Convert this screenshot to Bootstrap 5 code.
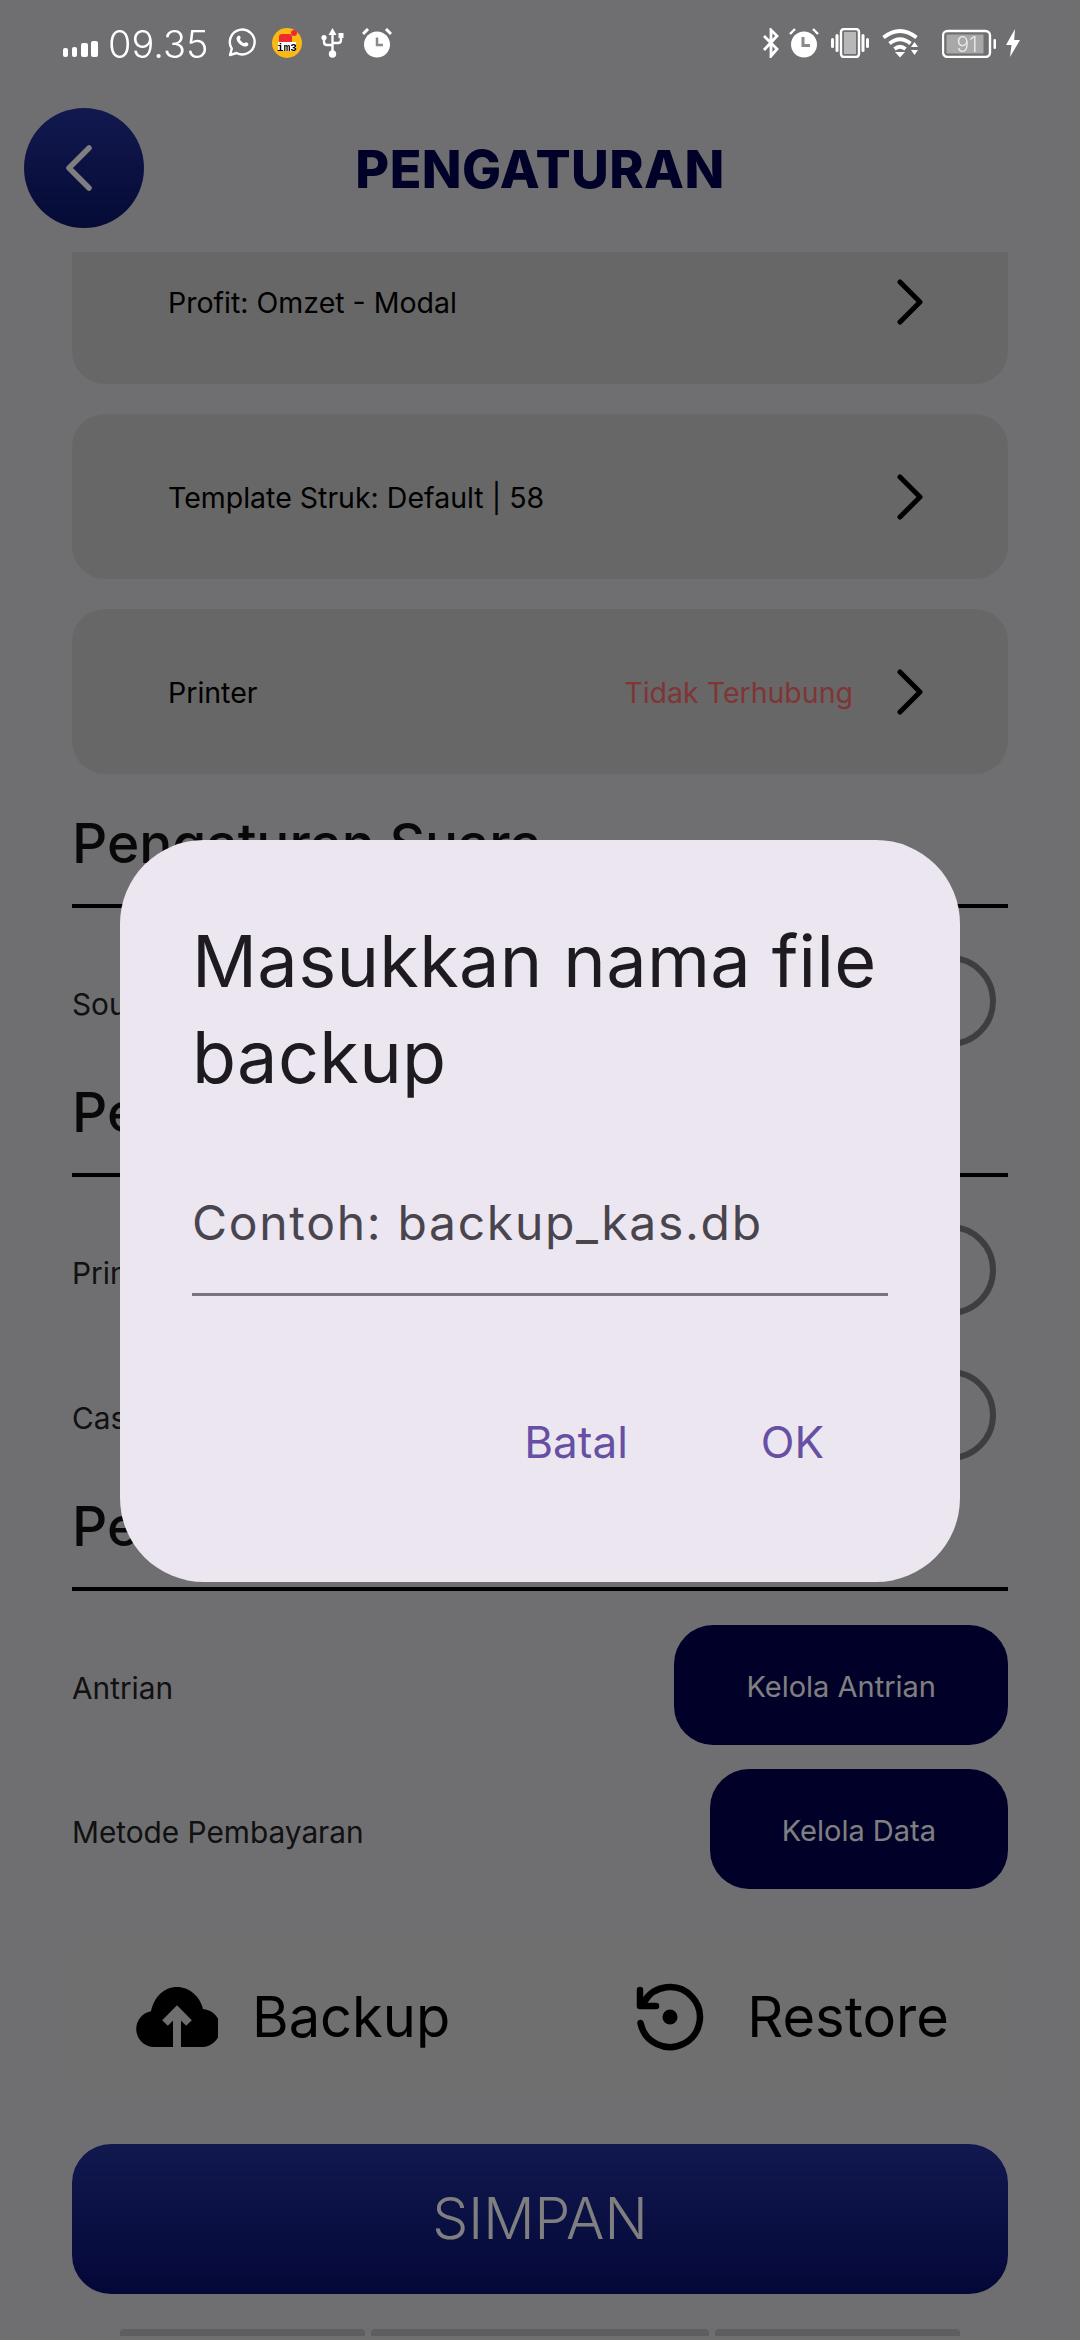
<!DOCTYPE html>
<html lang="id">
<head>
<meta charset="utf-8">
<title>Pengaturan</title>
<link rel="stylesheet" href="https://cdn.jsdelivr.net/npm/bootstrap@5.3.0/dist/css/bootstrap.min.css">
<style>
html,body{margin:0;background:#dedee2;font-family:"Inter","Liberation Sans",sans-serif;color:#000}
.phone{width:1080px;height:2340px;overflow:hidden;background:#dedee2}
.statusbar{height:84px;padding:28px 60px 0 63px;position:relative;z-index:1060;color:#fff;align-items:flex-start}
.statusbar svg{display:block;flex:none}
.clock{font-size:38px;line-height:30px;font-weight:300;width:97px;margin-top:1px}
.topbar{height:168px;display:grid;grid-template-columns:144px 1fr 144px;align-items:center}
.backbtn{width:120px;height:120px;margin-left:24px;border-radius:50%;background:linear-gradient(#24329e,#0a166a)}
.backbtn svg{margin-right:10px}
.pagetitle{font-size:52px;font-weight:800;color:#000050;text-align:center;margin:0;padding-top:5px;letter-spacing:.4px}
.scrollarea{height:2088px;overflow:hidden;padding:0 72px}
.setcard{height:165px;border-radius:33px;background:#cecece;padding:3px 84px 0 96px;margin-bottom:30px;font-size:28.5px}
.setcard svg{margin-top:-3px}
.setcard.cut{margin-top:-33px}
.offline{color:#ff6b6b;font-size:28.5px;margin-right:43px}
.sechead{height:104px;border-bottom:4px solid #000;font-size:55px;line-height:60px;font-weight:500;padding-bottom:31px;display:flex;align-items:flex-end;color:#111;margin-bottom:20px}
.setrow{height:145px;font-size:29.8px;color:#222}
.setrow>span,.setbtnrow>span{padding-top:7px}
.swt{width:156px!important;height:92px;margin:0!important;border:6px solid #7d7d80!important;background-color:transparent!important;border-radius:46px!important;float:none!important;flex:none}
.formswitch{padding:0;margin:0 12px 0 0;min-height:0}
.rowbtn{height:120px;border-radius:39px;background:#000050;color:#fff;font-size:29px;padding:4px 72px 0;border:0}
.rowbtn:hover{background:#000050;color:#fff}
.setbtnrow{height:120px;margin-bottom:24px;font-size:29.8px;color:#222}
.firstbtn{margin-top:34px}
.sharebox{height:172px;border-radius:33px;background:#dededf;margin-top:42px;padding-left:64px;font-size:56px}
.boxitem{gap:34px}
.boxitem.two{margin-left:186px;gap:43px}
.savebtn{width:100%;height:150px;margin-top:41px;border-radius:39px;border:0;color:#fff;font-size:57px;font-weight:300;background:linear-gradient(#24329e,#080f70)}
.savebtn:hover{color:#fff;background:linear-gradient(#24329e,#080f70)}
.tabstrip{margin:35px 48px 0;gap:6px;height:7px}
.tabstrip div{height:7px;background:#bdbdbd;border-radius:4px 4px 0 0}
.modal.shown{display:block;overflow:hidden}
.modal-dialog.filedlg{max-width:none;width:840px;margin:840px 0 0 120px}
.filedlg .modal-content{height:742px;border:0;border-radius:84px;background:#ece6f0;padding:73px 72px 0;color:#1d1b20}
.dlgtitle{font-size:72px;line-height:96px;font-weight:400;margin:0;letter-spacing:.33px}
.dlghint{margin-top:66px;height:125px;border-bottom:3px solid #79747e;color:#49454f;font-size:48px;line-height:104px;letter-spacing:1.7px}
.dlgact{margin-top:121px;gap:133px;padding-right:64px}
.dlgbtn{padding:0;border:0;background:none;color:#6750a4;font-size:44px;line-height:50px}
.dlgbtn:hover{color:#6750a4}
</style>
</head>
<body>
<div class="phone">
  <div class="statusbar d-flex">
    <div class="d-flex align-items-start">
      <svg width="35" height="30" viewBox="0 0 35 30" fill="#fff" style="margin-right:10px"><rect x="0" y="20" width="5" height="9" rx="2"/><rect x="9" y="19" width="5" height="10" rx="2"/><rect x="18" y="15" width="7" height="14" rx="2"/><rect x="28" y="13" width="7" height="16" rx="2"/></svg>
      <div class="clock">09.35</div>
      <svg width="28" height="29" viewBox="0 0 28 29" fill="none" style="margin-left:23px;margin-right:16px"><path d="M2 27l1.8-6.3A12.4 12.4 0 1 1 8.5 25z" stroke="#fff" stroke-width="2.4" stroke-linejoin="round"/><path d="M9.6 8.2c1.5-1.4 2.4-.6 3 1.1.3.9-.9 1.700-.6 2.300.8 1.600 2 2.800 3.900 3.600.6.2 1.200-1 1.900-1 1.200.2 3 1.200 2.600 2.300-.7 2.200-3.300 2.600-5.600 1.500-3.200-1.500-5.400-3.700-6.200-6.500-.3-1.300.1-2.500 1-3.300z" fill="#fff"/></svg>
      <svg width="30" height="30" viewBox="0 0 30 30" style="margin-right:19px"><circle cx="15" cy="15" r="15" fill="#fdb913"/><path d="M7 9q0-3 3-3h7q3 0 3 3v5H7z" fill="#ee2a2e"/><circle cx="22" cy="5" r="3" fill="#ee2a2e"/><rect x="6" y="14" width="18" height="9" fill="#fff"/><text x="15" y="22.500" font-size="11" font-weight="700" text-anchor="middle" fill="#000" font-family="Liberation Mono, monospace">im3</text></svg>
      <svg width="23" height="30" viewBox="0 0 23 30" fill="none" style="margin-right:18px"><path d="M11.500 0l4 7h-8z" fill="#fff"/><path d="M11.500 5v21M3 10v4q0 3 3 3h5.500M20 8v4q0 3-3 3h-5.500" stroke="#fff" stroke-width="2.400"/><circle cx="11.500" cy="26" r="3.700" fill="#fff"/><circle cx="3" cy="9.500" r="2.600" fill="#fff"/><rect x="17.500" y="5" width="5" height="5" fill="#fff"/></svg>
      <svg width="30" height="30" viewBox="0 0 30 30"><circle cx="15" cy="16.500" r="13" fill="#fff"/><path d="M1 6l5-5M29 6l-5-5" stroke="#fff" stroke-width="3"/><path d="M15 9.500v7.500h6" stroke="#8a8a8a" stroke-width="2.500" fill="none"/></svg>
    </div>
    <div class="d-flex align-items-start ms-auto">
      <svg width="18" height="30" viewBox="0 0 18 30" fill="none" style="margin-right:9px"><path d="M2 8l13 13-6 7V2l6 6L2 22" stroke="#fff" stroke-width="2.800"/></svg>
      <svg width="30" height="30" viewBox="0 0 30 30" style="margin-right:12px"><circle cx="15" cy="16.500" r="13" fill="#fff"/><path d="M1 6l5-5M29 6l-5-5" stroke="#fff" stroke-width="2.400"/><path d="M14 9v8.500h7" stroke="#8a8a8a" stroke-width="3" fill="none"/></svg>
      <svg width="38" height="30" viewBox="0 0 38 30" fill="#fff" style="margin-right:13px"><rect x="10" y="1" width="18" height="28" rx="3" fill="none" stroke="#fff" stroke-width="2.400"/><rect x="13" y="4" width="12" height="22" fill="#b8b8b8"/><rect x="0" y="10" width="3" height="10" rx="1.500"/><rect x="4.500" y="6" width="3" height="18" rx="1.500"/><rect x="30.500" y="6" width="3" height="18" rx="1.500"/><rect x="35" y="10" width="3" height="10" rx="1.500"/></svg>
      <svg width="36" height="30" viewBox="0 0 36 30" fill="none" style="margin-right:24px"><path d="M1.500 9.500Q18-3.500 34.500 9.500M7.500 15.500q10.500-8.500 21 0M12.500 21q5.500-4.500 11 0" stroke="#fff" stroke-width="3.800"/><path d="M13 24h10l-5 5.500zM29 19h7l-3.500-5zM29 22h7l-3.500 5z" fill="#fff"/></svg>
      <svg width="55" height="30" viewBox="0 0 55 30" style="margin-right:9px"><rect x="1" y="3" width="47" height="26" rx="4.500" fill="none" stroke="#fff" stroke-width="2.400"/><rect x="4.500" y="6.500" width="37" height="19" fill="#a8a8a8"/><rect x="51.500" y="11" width="2.500" height="10" rx="1.200" fill="#fff"/><text x="25" y="24" font-size="21" text-anchor="middle" fill="#e8e8e8" font-family="Inter, sans-serif" font-weight="300">91</text></svg>
      <svg width="14" height="30" viewBox="0 0 14 30" fill="#fff"><path d="M9 1L0 17h5.500L4 29l10-17H8.200z"/></svg>
    </div>
  </div>

  <div class="topbar">
    <div class="backbtn d-flex align-items-center justify-content-center">
      <svg width="28" height="46" viewBox="0 0 28 46" fill="none"><path d="M24 3L4 23l20 20" stroke="#fff" stroke-width="5.500" stroke-linecap="round" stroke-linejoin="round"/></svg>
    </div>
    <h1 class="pagetitle">PENGATURAN</h1>
    <div></div>
  </div>

  <div class="scrollarea">
    <div class="setcard cut d-flex align-items-center"><span>Profit: Omzet - Modal</span><svg class="ms-auto" width="28" height="46" viewBox="0 0 28 46" fill="none"><path d="M4 3l20 20L4 43" stroke="#000" stroke-width="5" stroke-linecap="round" stroke-linejoin="round"/></svg></div>
    <div class="setcard d-flex align-items-center"><span>Template Struk: Default | 58</span><svg class="ms-auto" width="28" height="46" viewBox="0 0 28 46" fill="none"><path d="M4 3l20 20L4 43" stroke="#000" stroke-width="5" stroke-linecap="round" stroke-linejoin="round"/></svg></div>
    <div class="setcard d-flex align-items-center"><span>Printer</span><span class="offline ms-auto">Tidak Terhubung</span><svg width="28" height="46" viewBox="0 0 28 46" fill="none"><path d="M4 3l20 20L4 43" stroke="#000" stroke-width="5" stroke-linecap="round" stroke-linejoin="round"/></svg></div>

    <div class="sechead">Pengaturan Suara</div>
    <div class="setrow d-flex align-items-center justify-content-between"><span>Sound</span><div class="form-check form-switch formswitch"><input class="form-check-input swt" type="checkbox" aria-label="Sound"></div></div>

    <div class="sechead">Pengaturan Printer</div>
    <div class="setrow d-flex align-items-center justify-content-between"><span>Print Otomatis</span><div class="form-check form-switch formswitch"><input class="form-check-input swt" type="checkbox" aria-label="Print"></div></div>
    <div class="setrow d-flex align-items-center justify-content-between"><span>Cash Drawer</span><div class="form-check form-switch formswitch"><input class="form-check-input swt" type="checkbox" aria-label="Cash"></div></div>

    <div class="sechead">Pengaturan Lain</div>
    <div class="setbtnrow firstbtn d-flex align-items-center justify-content-between"><span>Antrian</span><button type="button" class="btn rowbtn">Kelola Antrian</button></div>
    <div class="setbtnrow d-flex align-items-center justify-content-between"><span>Metode Pembayaran</span><button type="button" class="btn rowbtn">Kelola Data</button></div>

    <div class="sharebox d-flex align-items-center">
      <div class="boxitem d-flex align-items-center">
        <svg width="82" height="60" viewBox="0 0 82 60"><path d="M18 60a18 18 0 0 1-3-35.700C18 10 28 0 41 0c12 0 23 9 26 22a19 19 0 0 1-3 38z" fill="#000"/><path d="M41 60V24M29 36l12-12 12 12" stroke="#dededf" stroke-width="8" fill="none"/></svg>
        <span>Backup</span>
      </div>
      <div class="boxitem two d-flex align-items-center">
        <svg width="68" height="68" viewBox="0 0 68 68" fill="none"><path d="M4.500 40A30 30 0 1 0 8 19" stroke="#000" stroke-width="6.500" stroke-linecap="round"/><path d="M4 7v16h16" stroke="#000" stroke-width="6.500" stroke-linecap="round" stroke-linejoin="round"/><circle cx="34" cy="34" r="7.500" fill="#000"/></svg>
        <span>Restore</span>
      </div>
    </div>

    <button type="button" class="btn savebtn">SIMPAN</button>
    <div class="tabstrip d-flex">
      <div style="width:245px"></div><div style="width:338px"></div><div style="width:245px"></div>
    </div>
  </div>
</div>

<div class="modal-backdrop show"></div>
<div class="modal shown" role="dialog" aria-modal="true">
  <div class="modal-dialog filedlg">
    <div class="modal-content">
      <h2 class="dlgtitle">Masukkan nama file backup</h2>
      <div class="dlghint">Contoh: backup_kas.db</div>
      <div class="dlgact d-flex justify-content-end">
        <button type="button" class="btn dlgbtn">Batal</button>
        <button type="button" class="btn dlgbtn">OK</button>
      </div>
    </div>
  </div>
</div>
<script src="https://cdn.jsdelivr.net/npm/bootstrap@5.3.0/dist/js/bootstrap.bundle.min.js"></script>
</body>
</html>
